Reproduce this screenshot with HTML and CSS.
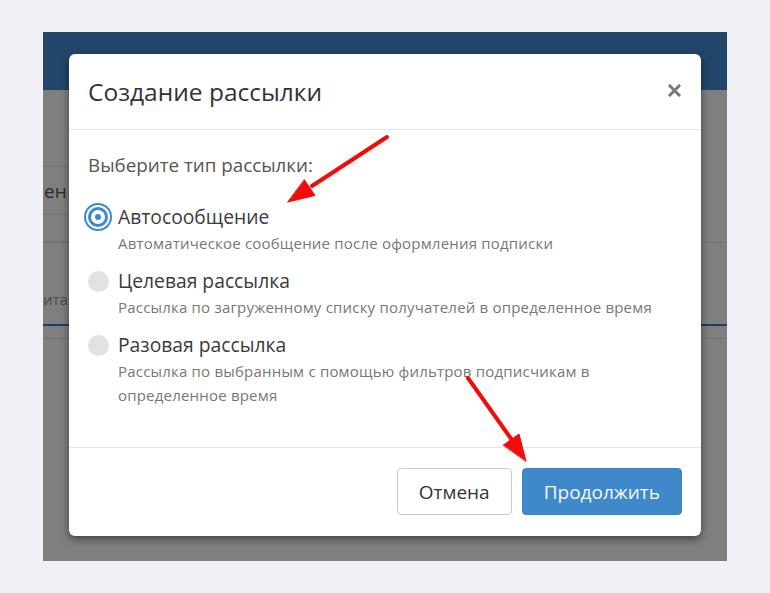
FILE: index.html
```html
<!DOCTYPE html>
<html lang="ru">
<head>
  <meta charset="UTF-8">
  <title>Создание рассылки</title>
  <link rel="stylesheet" href="styles.css">
</head>
<body>

  <div class="frame">
    <!-- страница под модалкой -->
    <div class="topbar"></div>
    <div class="page">
      <div class="row row-search"></div>
      <div class="row row-name"><span class="word">ен</span></div>
      <div class="row row-small"></div>
      <div class="tabs"><span class="tab">ита</span></div>
      <div class="row row-thin"></div>
    </div>

    <div class="backdrop"></div>

    <!-- MODAL -->
    <div class="modal">
      <div class="modal-header">
        <h2 class="modal-title">Создание рассылки</h2>
        <button class="modal-close" aria-label="Закрыть">
          <svg width="13" height="13" viewBox="0 0 13 13">
            <path d="M2 2 L11 11 M11 2 L2 11" stroke="#777" stroke-width="3" stroke-linecap="square"/>
          </svg>
        </button>
      </div>

      <div class="modal-body">
        <p class="intro">Выберите тип рассылки:</p>

        <label class="option">
          <span class="radio checked"></span>
          <span class="option-title">Автосообщение</span>
          <span class="option-desc">Автоматическое сообщение после оформления подписки</span>
        </label>

        <label class="option">
          <span class="radio"></span>
          <span class="option-title">Целевая рассылка</span>
          <span class="option-desc">Рассылка по загруженному списку получателей в определенное время</span>
        </label>

        <label class="option">
          <span class="radio"></span>
          <span class="option-title">Разовая рассылка</span>
          <span class="option-desc">Рассылка по выбранным с помощью фильтров подписчикам в определенное время</span>
        </label>
      </div>

      <div class="modal-footer">
        <button class="btn btn-cancel">Отмена</button>
        <button class="btn btn-primary">Продолжить</button>
      </div>
    </div>
  </div>

  <!-- стрелки-пометки поверх скриншота -->
  <svg class="marks" width="770" height="593" viewBox="0 0 770 593">
    <g fill="#f50a0a" stroke="#f50a0a" stroke-linecap="round">
      <line x1="387" y1="137" x2="312" y2="186" stroke-width="4"/>
      <polygon points="288,202 315,195.5 304.5,180" stroke-width="1"/>
      <line x1="468" y1="378" x2="512" y2="440" stroke-width="4"/>
      <polygon points="526,461 519,434 503.5,445" stroke-width="1"/>
    </g>
  </svg>

</body>
</html>
```

FILE: styles.css
```css
body {
  margin: 0;
  padding: 32px 43px;
  background: #eff1f6;
  font-family: 'Open Sans', 'Liberation Sans', sans-serif;
}

.frame {
  position: relative;
  width: 684px;
  height: 529px;
  overflow: hidden;
  background: #fff;
}

.topbar {
  height: 58px;
  background: #448cd4;
}

/* Контент страницы (затемнён) */
.page {
  width: 100%;
}

.row {
  width: 240px;
  border-bottom: 1px solid #e8e8e8;
}

.row-search {
  height: 76px;
}

.row-name {
  height: 47px;
  display: flex;
  align-items: center;
}

.word {
  font-size: 19px;
  color: #555;
  padding-left: 1px;
}

.row-small {
  height: 26px;
}

.tabs {
  height: 81px;
  display: flex;
  align-items: center;
  border-top: 1px solid #e8e8e8;
  border-bottom: 2px solid #3d7fc4;
}

.tab {
  font-size: 15px;
  color: #999;
  margin-top: 30px;
}

.row-thin {
  width: 100%;
  height: 12px;
  border-bottom: 1px solid #e8e8e8;
}

.backdrop {
  position: absolute;
  left: 0;
  top: 0;
  width: 100%;
  height: 100%;
  background: rgba(0,0,0,0.5);
}

/* Modal */
.modal {
  position: absolute;
  left: 26px;
  top: 22px;
  width: 632px;
  background: #fff;
  border-radius: 6px;
  box-shadow: 0 3px 9px rgba(0,0,0,0.5);
}

.modal-header {
  height: 75px;
  padding: 0 20px 0 19px;
  display: flex;
  align-items: center;
  justify-content: space-between;
  border-bottom: 1px solid #e5e5e5;
}

.modal-title {
  margin: 0;
  font-size: 24.5px;
  font-weight: 400;
  color: #333;
}

.modal-close {
  display: flex;
  padding: 0;
  margin-top: -3px;
  border: none;
  background: none;
  cursor: pointer;
}

.modal-body {
  padding: 24px 19px 40px;
}

.intro {
  margin: 0 0 27px;
  font-size: 18.8px;
  line-height: 23px;
  color: #555;
}

.option {
  display: grid;
  grid-template-columns: 30px 1fr;
  margin-bottom: 13px;
  cursor: pointer;
}

.option:last-child {
  margin-bottom: 0;
}

.radio {
  grid-row: 1;
  grid-column: 1;
  align-self: center;
  width: 21px;
  height: 21px;
  border-radius: 50%;
  background: #e2e2e2;
  box-sizing: border-box;
  position: relative;
}

.radio.checked {
  width: 20px;
  height: 20px;
  background: #fff;
  border: 3px solid #3c88cc;
  box-shadow: 0 0 0 2px #fff, 0 0 0 4px #3c88cc;
}

.radio.checked::after {
  content: "";
  position: absolute;
  left: 4px;
  top: 4px;
  width: 6px;
  height: 6px;
  border-radius: 50%;
  background: #3c88cc;
}

.option-title {
  grid-column: 2;
  font-size: 19.3px;
  line-height: 26px;
  color: #3b3b3b;
}

.option-desc {
  grid-column: 2;
  margin-top: 1px;
  font-size: 15px;
  line-height: 24px;
  letter-spacing: 0.2px;
  color: #777;
}

.modal-footer {
  display: flex;
  justify-content: flex-end;
  gap: 10px;
  padding: 20px 19px 21px;
  border-top: 1px solid #e5e5e5;
}

.btn {
  height: 47px;
  padding: 0 21px;
  font-family: inherit;
  font-size: 19px;
  border-radius: 4px;
  cursor: pointer;
}

.btn-cancel {
  background: #fff;
  color: #333;
  border: 1px solid #ccc;
}

.btn-primary {
  padding: 0 21px;
  background: #3f89ca;
  color: #f4f8fc;
  border: 1px solid #3a84c5;
}

.marks {
  position: absolute;
  left: 0;
  top: 0;
  pointer-events: none;
}
```
